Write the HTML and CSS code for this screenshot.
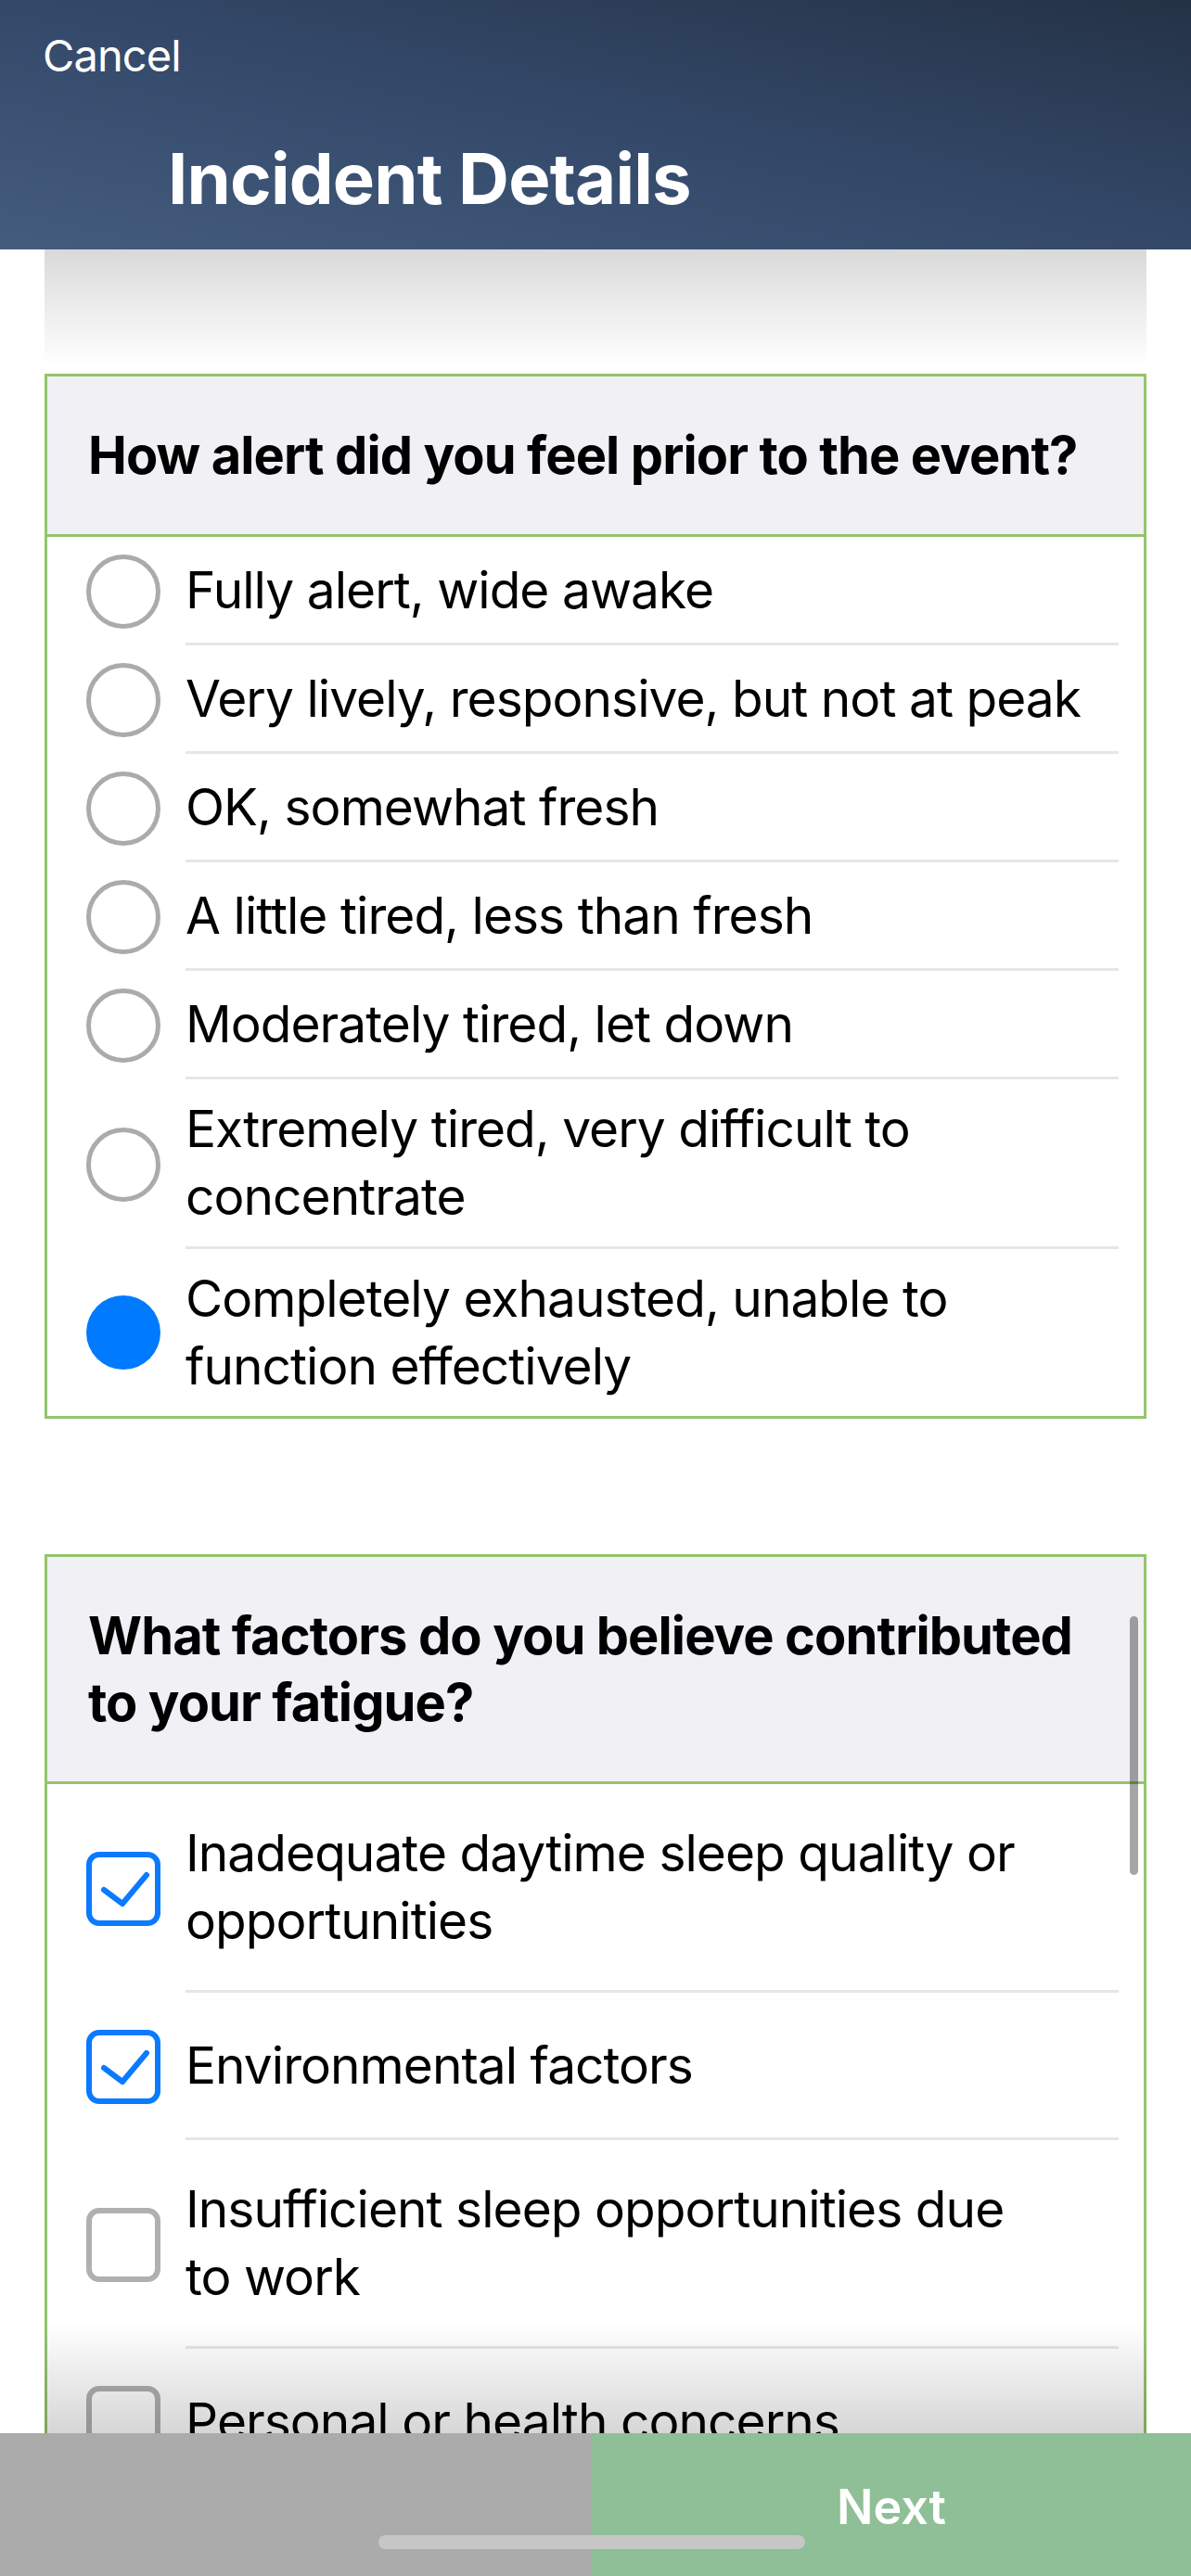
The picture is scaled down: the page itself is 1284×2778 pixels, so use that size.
FILE: index.html
```html
<!DOCTYPE html>
<html lang="en">
<head>
<meta charset="utf-8">
<title>Incident Details</title>
<link rel="stylesheet" href="styles.css">
</head>
<body>
<div class="screen">
  <header class="nav">
    <div class="cancel">Cancel</div>
    <h1 class="title">Incident Details</h1>
  </header>

  <main class="scroll">
    <section class="card">
      <div class="card-head">How alert did you feel prior to the event?</div>
      <div class="row">
        <span class="ind"><svg viewBox="0 0 80 80" width="80" height="80"><circle cx="40" cy="40" r="37.5" class="radio-off"/></svg></span>
        <div class="body">Fully alert, wide awake</div>
      </div>
      <div class="row">
        <span class="ind"><svg viewBox="0 0 80 80" width="80" height="80"><circle cx="40" cy="40" r="37.5" class="radio-off"/></svg></span>
        <div class="body">Very lively, responsive, but not at peak</div>
      </div>
      <div class="row">
        <span class="ind"><svg viewBox="0 0 80 80" width="80" height="80"><circle cx="40" cy="40" r="37.5" class="radio-off"/></svg></span>
        <div class="body">OK, somewhat fresh</div>
      </div>
      <div class="row">
        <span class="ind"><svg viewBox="0 0 80 80" width="80" height="80"><circle cx="40" cy="40" r="37.5" class="radio-off"/></svg></span>
        <div class="body">A little tired, less than fresh</div>
      </div>
      <div class="row">
        <span class="ind"><svg viewBox="0 0 80 80" width="80" height="80"><circle cx="40" cy="40" r="37.5" class="radio-off"/></svg></span>
        <div class="body">Moderately tired, let down</div>
      </div>
      <div class="row">
        <span class="ind"><svg viewBox="0 0 80 80" width="80" height="80"><circle cx="40" cy="40" r="37.5" class="radio-off"/></svg></span>
        <div class="body">Extremely tired, very difficult to concentrate</div>
      </div>
      <div class="row last">
        <span class="ind"><svg viewBox="0 0 80 80" width="80" height="80"><circle cx="40" cy="40" r="40" class="radio-on"/></svg></span>
        <div class="body">Completely exhausted, unable to function effectively</div>
      </div>
    </section>

    <section class="card">
      <div class="card-head">What factors do you believe contributed to your fatigue?</div>
      <div class="row check">
        <span class="ind"><svg viewBox="0 0 80 80" width="80" height="80"><rect x="3" y="3" width="74" height="74" rx="11" class="box-on"/><polyline points="19,41 39,56 65,25" class="tick"/></svg></span>
        <div class="body">Inadequate daytime sleep quality or opportunities</div>
      </div>
      <div class="row check">
        <span class="ind"><svg viewBox="0 0 80 80" width="80" height="80"><rect x="3" y="3" width="74" height="74" rx="11" class="box-on"/><polyline points="19,41 39,56 65,25" class="tick"/></svg></span>
        <div class="body">Environmental factors</div>
      </div>
      <div class="row check">
        <span class="ind"><svg viewBox="0 0 80 80" width="80" height="80"><rect x="3" y="3" width="74" height="74" rx="11" class="box-off"/></svg></span>
        <div class="body">Insufficient sleep opportunities due to work</div>
      </div>
      <div class="row check">
        <span class="ind"><svg viewBox="0 0 80 80" width="80" height="80"><rect x="3" y="3" width="74" height="74" rx="11" class="box-off"/></svg></span>
        <div class="body">Personal or health concerns</div>
      </div>
    </section>

    <div class="fade-top"></div>
    <div class="fade-bottom"></div>
    <div class="scrollbar"></div>
  </main>

  <footer class="bar">
    <div class="bar-left"></div>
    <div class="bar-right">Next</div>
    <div class="home"></div>
  </footer>
</div>
</body>
</html>
```

FILE: styles.css
```css
* { box-sizing: border-box; }
html, body { margin: 0; padding: 0; background: #fff; }
body { font-family: "Inter", "Noto Sans", sans-serif; color: #000; }

.screen {
  width: 1284px;
  height: 2778px;
  display: flex;
  flex-direction: column;
  overflow: hidden;
  position: relative;
}

.nav {
  height: 269px;
  flex: none;
  background: linear-gradient(to top right, #445c7e 0%, #34496a 50%, #243245 100%);
  color: #fff;
  padding: 30px 0 0 46px;
}
.cancel {
  font-size: 47px;
  line-height: 60px;
  font-weight: 400;
  letter-spacing: -0.9px;
}
.title {
  margin: 57px 0 0 135px;
  font-size: 76px;
  line-height: 90px;
  font-weight: 700;
  letter-spacing: -0.8px;
}

.scroll {
  flex: 1;
  position: relative;
  overflow: hidden;
  padding: 134px 48px 0;
}

.card {
  border: 3px solid #94c46c;
  margin-bottom: 146px;
}
.card-head {
  background: #f0f0f5;
  border-bottom: 3px solid #94c46c;
  padding: 49px 40px 49px 44px;
  font-size: 56px;
  line-height: 72px;
  font-weight: 700;
  letter-spacing: -0.9px;
}

.row {
  display: flex;
  align-items: stretch;
  padding: 0 27px 0 42px;
}
.ind {
  flex: none;
  width: 80px;
  height: 80px;
  align-self: center;
  margin-right: 27px;
}
.ind svg { display: block; }
.body {
  flex: 1;
  min-height: 117px;
  padding: 17px 0;
  border-bottom: 3px solid #e3e6ea;
  display: flex;
  align-items: center;
  font-size: 55px;
  line-height: 73px;
  letter-spacing: -0.95px;
}
.row.last .body { border-bottom: none; }
.row.check .body { padding: 38px 70px 38px 0; min-height: 159px; }

.radio-off { fill: none; stroke: #ababab; stroke-width: 5; }
.radio-on { fill: #007aff; }
.box-on { fill: none; stroke: #0a7aff; stroke-width: 6; }
.box-off { fill: none; stroke: #b0b0b0; stroke-width: 6; }
.tick { fill: none; stroke: #0a7aff; stroke-width: 6; stroke-linecap: round; stroke-linejoin: round; }

.fade-top {
  position: absolute;
  top: 0;
  left: 48px;
  right: 48px;
  height: 126px;
  background: linear-gradient(rgba(0,0,0,0.15), rgba(0,0,0,0));
}
.fade-bottom {
  position: absolute;
  bottom: 0;
  left: 48px;
  right: 48px;
  height: 120px;
  background: linear-gradient(rgba(0,0,0,0), rgba(0,0,0,0.16));
}
.scrollbar {
  position: absolute;
  top: 1474px;
  left: 1218px;
  width: 9px;
  height: 279px;
  border-radius: 5px;
  background: rgba(0,0,0,0.35);
}

.bar {
  height: 154px;
  flex: none;
  display: flex;
  position: relative;
}
.bar-left { flex: none; width: 638px; background: #ababab; }
.bar-right {
  flex: 1;
  background: #8ebf96;
  color: #fff;
  text-align: center;
  font-size: 52px;
  line-height: 60px;
  font-weight: 600;
  padding-top: 50px;
}
.home {
  position: absolute;
  left: 408px;
  bottom: 29px;
  width: 460px;
  height: 15px;
  border-radius: 8px;
  background: #c6c6c6;
}
```
